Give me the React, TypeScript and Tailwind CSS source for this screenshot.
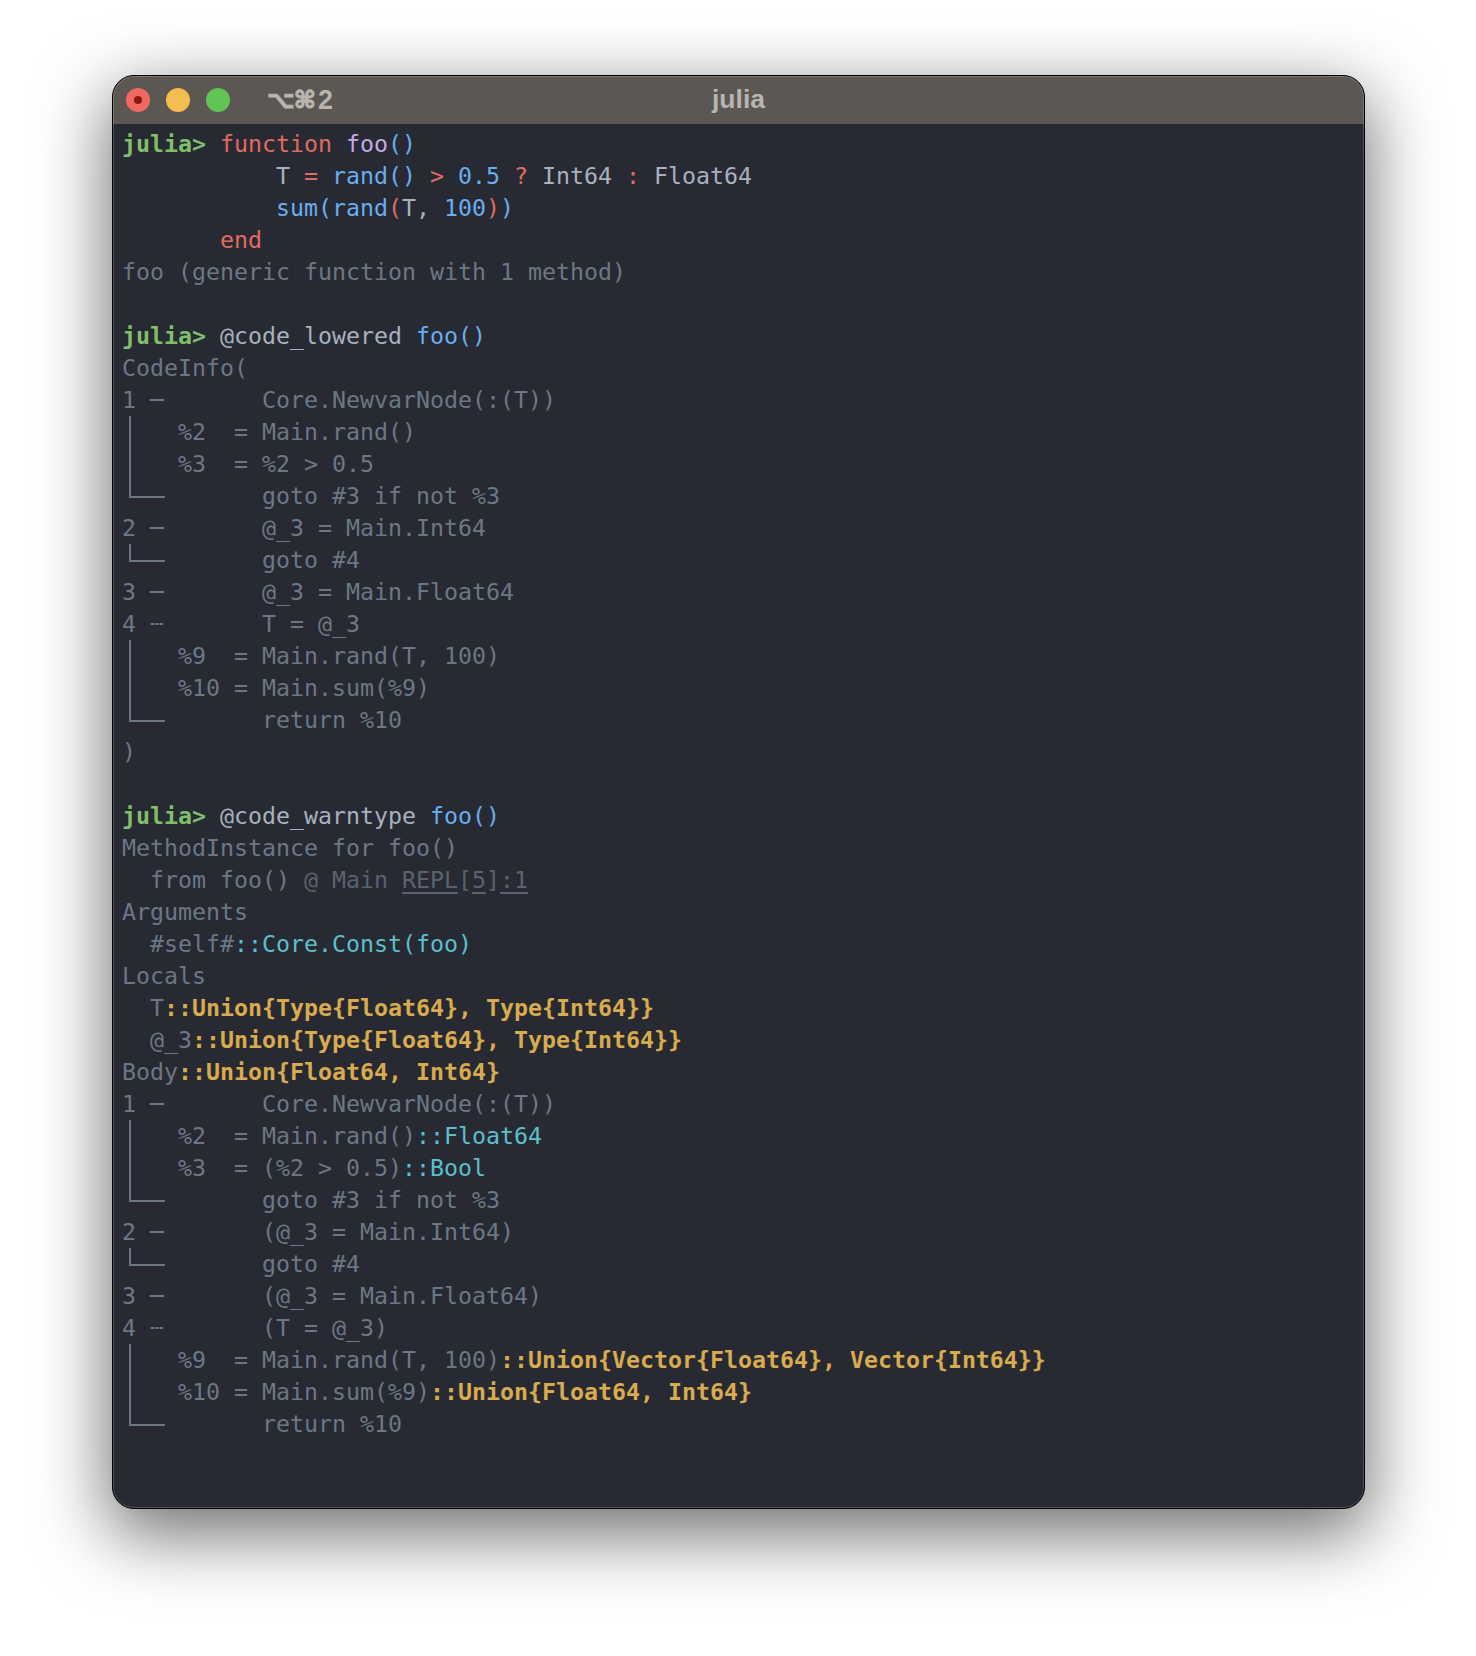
import React from "react";

const R = "text-[#e06c5f]";
const B = "text-[#69aef0]";
const P = "text-[#c6a8e6]";
const F = "text-[#a9b1bc]";
const D = "text-[#6d7783]";
const G = "text-[#7fbf6a] font-bold";
const C = "text-[#5bc0cb]";
const Y = "text-[#d8ab4e] font-bold";
const M = "text-[#5b626d]";
const U = "text-[#5b626d] underline underline-offset-4";

type Seg = [string, string];
const lines: Seg[][] = [
  [["julia> ", G], ["function ", R], ["foo", P], ["()", B]],
  [["           T ", F], ["= ", R], ["rand()", B], [" > ", R], ["0.5", B], [" ? ", R], ["Int64 ", F], [": ", R], ["Float64", F]],
  [["           ", F], ["sum(rand", B], ["(", R], ["T, ", F], ["100", B], [")", R], [")", B]],
  [["       ", F], ["end", R]],
  [["foo (generic function with 1 method)", D]],
  [],
  [["julia> ", G], ["@code_lowered ", F], ["foo()", B]],
  [["CodeInfo(", D]],
  [["1 ─       Core.NewvarNode(:(T))", D]],
  [["│", "bar"], ["   %2  = Main.rand()", D]],
  [["│", "bar"], ["   %3  = %2 > 0.5", D]],
  [["└──", "corner"], ["       goto #3 if not %3", D]],
  [["2 ─       @_3 = Main.Int64", D]],
  [["└──", "corner"], ["       goto #4", D]],
  [["3 ─       @_3 = Main.Float64", D]],
  [["4 ┄       T = @_3", D]],
  [["│", "bar"], ["   %9  = Main.rand(T, 100)", D]],
  [["│", "bar"], ["   %10 = Main.sum(%9)", D]],
  [["└──", "corner"], ["       return %10", D]],
  [[")", D]],
  [],
  [["julia> ", G], ["@code_warntype ", F], ["foo()", B]],
  [["MethodInstance for foo()", D]],
  [["  from foo() ", D], ["@ Main ", M], ["REPL", U], ["[", M], ["5", U], ["]", M], [":1", U]],
  [["Arguments", D]],
  [["  #self#", D], ["::Core.Const(foo)", C]],
  [["Locals", D]],
  [["  T", D], ["::Union{Type{Float64}, Type{Int64}}", Y]],
  [["  @_3", D], ["::Union{Type{Float64}, Type{Int64}}", Y]],
  [["Body", D], ["::Union{Float64, Int64}", Y]],
  [["1 ─       Core.NewvarNode(:(T))", D]],
  [["│", "bar"], ["   %2  = Main.rand()", D], ["::Float64", C]],
  [["│", "bar"], ["   %3  = (%2 > 0.5)", D], ["::Bool", C]],
  [["└──", "corner"], ["       goto #3 if not %3", D]],
  [["2 ─       (@_3 = Main.Int64)", D]],
  [["└──", "corner"], ["       goto #4", D]],
  [["3 ─       (@_3 = Main.Float64)", D]],
  [["4 ┄       (T = @_3)", D]],
  [["│", "bar"], ["   %9  = Main.rand(T, 100)", D], ["::Union{Vector{Float64}, Vector{Int64}}", Y]],
  [["│", "bar"], ["   %10 = Main.sum(%9)", D], ["::Union{Float64, Int64}", Y]],
  [["└──", "corner"], ["       return %10", D]],
];

export default function App() {
  return (
    <div className="min-h-[1656px] bg-white pl-[112px] pt-[75px]">
      <div className="relative flex h-[1434px] w-[1253px] flex-col overflow-hidden rounded-[22px] border border-black bg-[#282a33] shadow-[0_22px_70px_4px_rgba(0,0,0,0.56)]">
        <div className="relative flex h-[48px] shrink-0 items-center bg-[#5c5752] pl-[13px] font-['Liberation_Sans','DejaVu_Sans',sans-serif] font-bold text-[#b8b5b1]">
          <div className="flex items-center gap-[16px]">
            <div className="flex h-[24px] w-[24px] items-center justify-center rounded-full bg-[#ee6a5f]">
              <div className="h-[8px] w-[8px] rounded-full bg-[#8c1a10]" />
            </div>
            <div className="h-[24px] w-[24px] rounded-full bg-[#f5bd4f]" />
            <div className="h-[24px] w-[24px] rounded-full bg-[#61c454]" />
          </div>
          <div className="ml-[37px] flex items-center">
            <span className="font-['DejaVu_Sans',sans-serif] text-[24px] tracking-[-1px] [-webkit-text-stroke:1px_#b8b5b1]">⌥⌘</span>
            <span className="ml-[3px] text-[27px]">2</span>
          </div>
          <div className="absolute inset-x-0 text-center text-[26.5px]">julia</div>
        </div>
        <div className="flex-1 pl-[9px] pt-[4px] font-['DejaVu_Sans_Mono','Liberation_Mono',monospace] text-[23.25px] leading-[32px]">
          {lines.map((segs, i) => (
            <div key={i} className="relative h-[32px] whitespace-pre">
              {segs.map(([t, c], j) =>
                c === "bar" ? (
                  <span key={j} className="text-transparent">
                    {t}
                    <span className="absolute left-[7px] top-0 h-[32px] w-[2px] bg-[#6d7783]" />
                  </span>
                ) : c === "corner" ? (
                  <span key={j} className="text-transparent">
                    {t}
                    <span className="absolute left-[7px] top-0 h-[18px] w-[36px] border-b-2 border-l-2 border-[#6d7783]" />
                  </span>
                ) : (
                  <span key={j} className={c}>
                    {t}
                  </span>
                ),
              )}
            </div>
          ))}
        </div>
        <div className="pointer-events-none absolute inset-0 rounded-[21px] border border-[#ffffff30]" />
      </div>
    </div>
  );
}
